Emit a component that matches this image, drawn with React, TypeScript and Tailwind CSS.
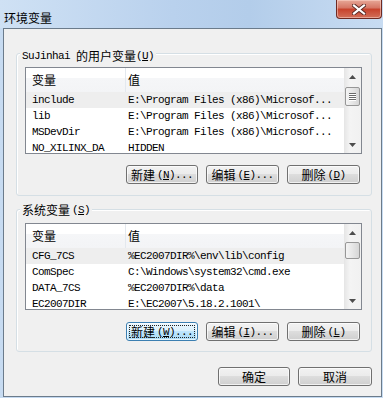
import type { ReactNode } from "react";

const mono = "font-['Liberation_Mono',monospace] text-[11px] tracking-[-0.6px]";
const cjk = "font-['Noto_Sans_CJK_SC',sans-serif] text-[12px]";

type Row = [string, string];

const userRows: Row[] = [
  ["include", "E:\\Program Files (x86)\\Microsof..."],
  ["lib", "E:\\Program Files (x86)\\Microsof..."],
  ["MSDevDir", "E:\\Program Files (x86)\\Microsof..."],
  ["NO_XILINX_DA", "HIDDEN"],
];

const sysRows: Row[] = [
  ["CFG_7CS", "%EC2007DIR%\\env\\lib\\config"],
  ["ComSpec", "C:\\Windows\\system32\\cmd.exe"],
  ["DATA_7CS", "%EC2007DIR%\\data"],
  ["EC2007DIR", "E:\\EC2007\\5.18.2.1001\\"],
];

function Key({ cn, k, dots }: { cn: string; k: string; dots?: boolean }) {
  return (
    <span className="inline-flex items-center whitespace-pre leading-[14px]">
      <span className={cjk}>{cn}</span>
      <span className={`${mono} ml-[2px]`}>
        (<span className="underline">{k}</span>){dots ? "..." : ""}
      </span>
    </span>
  );
}

function Btn({ w, focus, children }: { w: string; focus?: boolean; children: ReactNode }) {
  const skin = focus
    ? "border-[#3c7fb1] bg-[linear-gradient(180deg,#eaf6fd_0%,#d9f0fc_50%,#bee6fd_50%,#a7d9f5_100%)]"
    : "border-[#707070] bg-[linear-gradient(180deg,#f2f2f2_0%,#ebebeb_50%,#dddddd_50%,#cfcfcf_100%)]";
  return (
    <button
      className={`relative h-[19px] ${w} rounded-[3px] border ${skin} shadow-[inset_0_0_0_1px_rgba(255,255,255,0.7)] flex items-center justify-center text-black`}
    >
      {focus && <span className="absolute inset-[2px] border border-dotted border-[#222]" />}
      {children}
    </button>
  );
}

function Arrow({ up }: { up?: boolean }) {
  return (
    <div className="h-[17px] flex items-center justify-center">
      <svg width="7" height="4" viewBox="0 0 7 4">
        <path d={up ? "M0 4 L3.5 0 L7 4 Z" : "M0 0 L3.5 4 L7 0 Z"} fill="#4d4d4d" />
      </svg>
    </div>
  );
}

function List({ rows, thumbTop, thumbH, grip }: { rows: Row[]; thumbTop: string; thumbH: string; grip?: boolean }) {
  return (
    <div className="w-[337px] h-[87px] border border-[#828790] bg-white flex overflow-hidden">
      <div className="flex-1 overflow-hidden">
        <div className="h-[24px] flex bg-[linear-gradient(180deg,#ffffff_0%,#ffffff_42%,#f5f6f8_42%,#f3f4f6_100%)]">
          <div className={`w-[100px] pl-[6px] flex items-center border-r border-[#e3e8ee] ${cjk}`}>变量</div>
          <div className={`pl-[2px] flex items-center ${cjk}`}>值</div>
        </div>
        {rows.map(([name, value], i) => (
          <div key={name} className={`h-[16px] flex items-center whitespace-pre ${mono} ${i === 0 ? "bg-[#eeeeee]" : ""}`}>
            <div className="w-[100px] pl-[6px]">{name}</div>
            <div className="pl-[2px]">{value}</div>
          </div>
        ))}
      </div>
      <div className="relative w-[17px] h-full bg-[linear-gradient(90deg,#e5e5e5_0%,#f4f4f4_35%,#f1f1f1_100%)] flex flex-col justify-between">
        <Arrow up />
        <div
          className={`absolute left-[1px] right-[1px] ${thumbTop} ${thumbH} rounded-[2px] border border-[#979797] bg-[linear-gradient(90deg,#f4f4f4_0%,#e6e6e6_50%,#d6d6d6_100%)] flex flex-col items-center justify-center gap-[1px]`}
        >
          {grip &&
            [0, 1, 2, 3].map((n) => (
              <div key={n} className="w-[7px] h-[1px] bg-[#6a6a6a] shadow-[0_1px_0_#ffffff]" />
            ))}
        </div>
        <Arrow />
      </div>
    </div>
  );
}

function Group({ label, children }: { label: ReactNode; children: ReactNode }) {
  return (
    <div className="relative w-[356px] h-[143px] rounded-[3px] border border-[#d5dfe5] shadow-[inset_1px_1px_0_#ffffff] pl-[8px] pt-[13px]">
      <span className="absolute -top-[8px] left-[3px] px-[2px] bg-[#f0f0f0] leading-[14px]">{label}</span>
      {children}
    </div>
  );
}

export default function App() {
  return (
    <div className="w-[383px] h-[398px] bg-[linear-gradient(90deg,#c7dbf1,#b6cfeb_50%,#c9ddf2)] relative overflow-hidden text-black">
      <div className="h-[28px] pl-[4px] pt-[5px] bg-[linear-gradient(90deg,#cfe1f4_0%,#b9d1ed_45%,#b3cdea_65%,#c8dcf2_100%)]">
        <span className={`${cjk} leading-[16px]`}>环境变量</span>
      </div>
      <button className="absolute top-0 right-[1px] w-[46px] h-[19px] rounded-b-[4px] border border-t-0 border-[#6e2a22] bg-[linear-gradient(180deg,#e7a898_0%,#d57463_45%,#c7412b_50%,#d2705a_100%)] shadow-[inset_0_0_0_1px_rgba(255,220,210,0.5)] flex items-center justify-center">
        <svg width="14" height="11" viewBox="0 0 14 11">
          <path d="M2 1.5 L12 9.5 M12 1.5 L2 9.5" stroke="#5a2a24" strokeWidth="4" strokeLinecap="square" />
          <path d="M2 1.5 L12 9.5 M12 1.5 L2 9.5" stroke="#ffffff" strokeWidth="2.2" strokeLinecap="square" />
        </svg>
      </button>
      <div className="ml-[3px] w-[379px] h-[369px] border border-[#6b7b8b] bg-[#f0f0f0] pl-[12px] pt-[24px]">
        <Group
          label={
            <span className="inline-flex items-center whitespace-pre">
              <span className={mono}>SuJinhai </span>
              <span className={cjk}>的用户变量</span>
              <span className={mono}>
                (<span className="underline">U</span>)
              </span>
            </span>
          }
        >
          <List rows={userRows} thumbTop="top-[19px]" thumbH="h-[19px]" grip />
          <div className="w-[337px] mt-[11px] pr-[2px] flex justify-end gap-[8px]">
            <Btn w="w-[72px]"><Key cn="新建" k="N" dots /></Btn>
            <Btn w="w-[73px]"><Key cn="编辑" k="E" dots /></Btn>
            <Btn w="w-[73px]"><Key cn="删除" k="D" /></Btn>
          </div>
        </Group>
        <div className="mt-[13px]">
          <Group
            label={
              <span className="inline-flex items-center whitespace-pre">
                <span className={cjk}>系统变量</span>
                <span className={`${mono} ml-[2px]`}>
                  (<span className="underline">S</span>)
                </span>
              </span>
            }
          >
            <List rows={sysRows} thumbTop="top-[18px]" thumbH="h-[17px]" />
            <div className="w-[337px] mt-[12px] pr-[2px] flex justify-end gap-[8px]">
              <Btn w="w-[72px]" focus><Key cn="新建" k="W" dots /></Btn>
              <Btn w="w-[73px]"><Key cn="编辑" k="I" dots /></Btn>
              <Btn w="w-[73px]"><Key cn="删除" k="L" /></Btn>
            </div>
          </Group>
        </div>
        <div className="w-[356px] mt-[15px] flex justify-end gap-[8px]">
          <Btn w="w-[72px]"><span className={cjk}>确定</span></Btn>
          <Btn w="w-[74px]"><span className={cjk}>取消</span></Btn>
        </div>
      </div>
    </div>
  );
}
